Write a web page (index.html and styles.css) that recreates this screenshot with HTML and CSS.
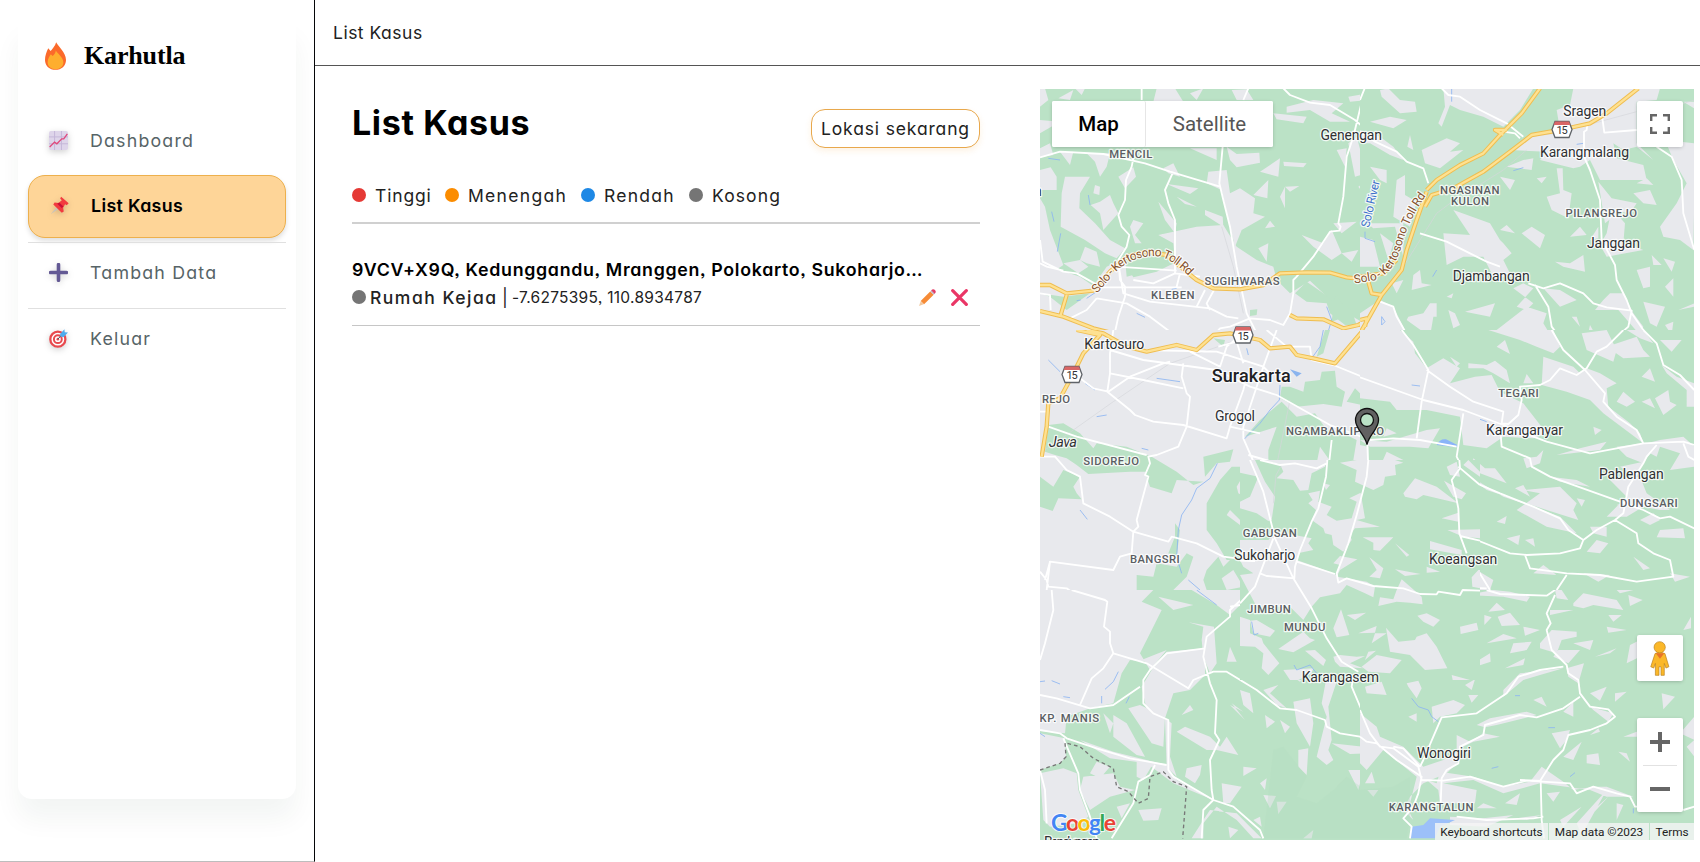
FILE: index.html
```html
<!DOCTYPE html>
<html lang="id">
<head>
<meta charset="utf-8">
<title>Karhutla - List Kasus</title>
<link rel="stylesheet" href="styles.css">
</head>
<body>
<div class="app">
  <aside class="sidebar">
    <div class="side-card">
      <div class="brand">
        <svg class="flame" viewBox="0 0 64 84"><path d="M34 0C39 12 64 30 64 54C64 72 50 84 32 84C14 84 0 72 0 54C0 40 5 28 10 18L17 27C22 21 31 11 34 0Z" fill="#fb6a2b"/><path d="M33 25C38 35 56 45 56 61C56 74 46 82 32 82C18 82 8 74 8 61C8 51 14 43 18 37L23 42C28 38 32 33 33 25Z" fill="#feae2e"/></svg>
        <span class="brand-name">Karhutla</span>
      </div>
      <nav class="menu">
        <a class="item first"><svg class="ico" viewBox="0 0 58 58"><rect width="58" height="58" rx="6" fill="#ded5ea"/><path d="M17 0V58M38 0V58M0 18H58M0 39H58" stroke="#c4b7d8" stroke-width="3"/><path d="M2 49L17 34L24 39L39 24H45L56 9" fill="none" stroke="#e0487c" stroke-width="4"/></svg><span>Dashboard</span></a>
        <a class="item active"><svg class="ico" viewBox="0 0 58 58"><path d="M2 56L20 34L26 40Z" fill="#c9c2b8"/><path d="M34 2L57 22L51 28L46 25L40 36L42 47L36 51L10 26L14 20L26 21L36 13L31 8Z" fill="#f23a3f"/><path d="M28 20L41 32L36 37L22 24Z" fill="#c90e35"/></svg><span>List Kasus</span></a>
        <a class="item"><svg class="ico" viewBox="0 0 58 58"><path d="M29 5V53M5 29H53" stroke="#635994" stroke-width="11" stroke-linecap="round"/></svg><span>Tambah Data</span></a>
        <a class="item"><svg class="ico" viewBox="0 0 58 58"><circle cx="27" cy="31" r="23" fill="#fff" stroke="#e84a4f" stroke-width="7"/><circle cx="27" cy="31" r="12" fill="#fff" stroke="#e84a4f" stroke-width="6"/><circle cx="27" cy="31" r="4" fill="#e84a4f"/><path d="M27 31L40 17" stroke="#456" stroke-width="3"/><path d="M34 15L47 1L48 10L58 11L44 25L34 22Z" fill="#4eabed"/></svg><span>Keluar</span></a>
      </nav>
    </div>
  </aside>
  <main class="main">
    <header class="topbar">List Kasus</header>
    <div class="content">
      <section class="cases">
        <div class="head"><h1>List Kasus</h1><button class="locate">Lokasi sekarang</button></div>
        <div class="legend">
          <span class="key tinggi"><i class="dot red"></i>Tinggi</span>
          <span class="key menengah"><i class="dot orange"></i>Menengah</span>
          <span class="key rendah"><i class="dot blue"></i>Rendah</span>
          <span class="key kosong"><i class="dot gray"></i>Kosong</span>
        </div>
        <article class="case">
          <h2>9VCV+X9Q, Kedunggandu, Mranggen, Polokarto, Sukoharjo…</h2>
          <div class="meta">
            <i class="dot gray"></i><span class="place">Rumah Kejaa</span><span class="bar">|</span><span class="coords">-7.6275395, 110.8934787</span>
            <svg class="act" viewBox="0 0 50 50"><path d="M0 50L5 36L14 45Z" fill="#f1c9a0"/><path d="M5 35L33 7L43 17L15 45Z" fill="#f68b36"/><path d="M33 7L37 3L47 13L43 17Z" fill="#c5b5c4"/><path d="M36 4Q41-2 47 3Q52 9 46 14Z" fill="#e43b65"/></svg>
            <svg class="act" viewBox="0 0 50 50"><path d="M5 5L45 45M45 5L5 45" stroke="#ea3666" stroke-width="9.5" stroke-linecap="round"/></svg>
          </div>
        </article>
      </section>
      <section class="map">
        <svg class="canvas" viewBox="1040 89 654 751">
          <defs>
            <g id="shield"><path d="M-7 -8H7L10 0L7 8H-7L-10 0Z" fill="#fff" stroke="#5f6368" stroke-width="1.3"/><path d="M-7 -8H7L8.3 -4.6H-8.3Z" fill="#d96666"/><text class="num" x="-5.6" y="4.8" textLength="11.2">15</text></g>
          </defs>
          <!-- north west -->
          <svg x="1030" y="80" width="340" height="260" viewBox="0 0 1020 780">
            <rect class="land" width="1020" height="780"/>
            <path class="town" d="M385 465L500 440L580 435L620 500L680 540L730 560L740 600L780 640L840 602L880 640L910 680L905 725L960 705L1020 740V780H0V540L60 560L150 590L190 618L230 560L285 535L290 590L400 560L435 550L430 490ZM30 270L62 262L80 290L80 330L30 330ZM30 355L45 380L60 450L100 555L70 575L30 550ZM105 290L180 290L150 340L148 385L195 430L240 480L285 505L260 535L225 520L165 480L110 450L92 440L95 340ZM45 25L55 60L30 80V25ZM85 55L130 30L120 60ZM135 25H165L155 45ZM380 25H435L460 65H370ZM480 40L520 25L500 60ZM605 30L650 28L670 60H620ZM770 80L850 60L940 70L905 100L960 125L900 125L840 90L770 98ZM955 50L1015 40V60L960 65ZM730 100L830 110L820 130L740 118ZM170 220L240 220L230 260L210 290L195 245ZM30 205L60 190L70 225L30 232ZM90 215L130 215L120 255ZM265 290L310 262L318 290L285 325ZM195 315L210 320L208 345L190 340ZM182 375L210 365L240 345L250 370L265 400L220 450L210 400ZM400 265L430 250L450 290L415 280ZM410 312L505 325L480 342ZM440 350L500 380L465 372ZM385 365L440 430L435 460L405 420ZM525 390L578 410L580 440L525 405ZM535 275L590 270L600 340L630 325L675 355L670 400L705 410L635 450L615 500L595 420L575 330L530 310ZM590 200L620 222L688 218L690 248L620 262L600 240ZM690 275L750 235L745 290ZM760 245L830 250L820 262L762 258ZM670 345L715 300L712 355ZM750 350L765 320L765 385ZM765 320L808 318L780 335ZM705 445L720 422L735 440ZM685 505L715 490L710 545ZM815 465L880 490L905 450L935 520L905 540L850 500ZM935 520L985 510L965 545ZM910 430L980 425L935 460ZM955 190L980 170L1010 280L975 290ZM985 320L1000 310L1020 350V365ZM300 440L310 420L340 430L315 465L335 490L315 490ZM395 462L430 460V475Z"/>
            <path class="town" d="M100 550L150 540L175 560L145 580ZM150 540L165 500L200 515L210 560L170 550ZM30 120L90 125L30 160ZM480 205L560 205L560 240ZM920 210L950 205L945 260Z"/>
            <path class="land" d="M795 640L830 605L880 640L910 665L920 645L935 670L965 690L980 735L945 735L900 700L890 670L830 665ZM660 690L682 688L680 705L660 708ZM300 575L360 550L440 545L380 575L310 592ZM30 640L100 650L180 640L110 690L60 650Z"/>
            <path class="water" d="M175 345L180 375M65 395L72 425M92 460L82 515M55 235L90 240M320 700L345 712M170 655L200 635M140 662L152 660M425 628L440 625M890 680L905 720L890 770M1005 480L1020 440"/>
            <path class="rail" d="M575 440L610 560L640 700"/>
            <path class="road" d="M335 25V60M30 232L90 215L220 222L345 250L420 275L570 320M310 235L305 260L288 300L285 360L265 405L275 440L298 465L290 500L265 540L270 600L285 620L285 650L265 710L250 780M430 275L405 330L415 370L435 420V580L510 590M655 25L640 60M578 200L568 310L580 360L600 440L620 560L650 700L690 780M760 25L780 45L840 68L900 75L975 120L1020 160M1005 25L970 170L950 230L940 350L925 430L932 440L928 452L900 455L880 485L850 530L800 590L790 600L790 640L780 700L760 735L720 720L660 715L600 740L570 745L540 780M30 480L38 545L100 575L140 580L215 622H455M450 580L440 620M30 550L50 560L100 572M310 600L370 610L435 580M260 560L440 572M265 550L280 640L360 665L540 685L590 710L625 715M200 655L290 670L360 710L420 755L470 780M525 630L500 680M552 630L530 670L540 690M30 640L60 645L62 690M200 655L170 690L120 715"/>
            <path class="hwyo" d="M30 615H60L110 640L190 632L240 575L290 530L350 515L410 525L450 560L500 600L550 625L630 628L700 615L750 580L830 577L900 578L950 592L1020 600M110 645L92 705M30 693L100 710L190 745L250 760L280 780M780 705L800 715L880 718L940 745L985 735L1020 715M985 780L1020 735"/><path class="hwyi" d="M30 615H60L110 640L190 632L240 575L290 530L350 515L410 525L450 560L500 600L550 625L630 628L700 615L750 580L830 577L900 578L950 592L1020 600M110 645L92 705M30 693L100 710L190 745L250 760L280 780M780 705L800 715L880 718L940 745L985 735L1020 715M985 780L1020 735"/>
          </svg>
          <!-- north east -->
          <svg x="1360" y="80" width="340" height="260" viewBox="0 0 1020 780">
            <rect class="land" width="1020" height="780"/>
            <path class="town" d="M60 30L85 25L120 60L165 65L170 95L120 100L65 50ZM250 25H520L480 90L430 140L370 110L300 90L270 75L245 140L235 130L255 80ZM640 25H900L890 60L830 65V190L880 240L830 200L790 210L760 190L770 235L850 255L860 300L720 300L690 240L660 260L640 265L540 240L560 215L450 210L520 160L600 150L590 90L630 75ZM350 45L395 35L410 60L370 75ZM30 125L90 110L140 120L100 145ZM0 150L60 170L100 200L130 240L90 225L30 190L0 190ZM142 200L150 165L160 210ZM185 210L260 175L300 190L270 215L310 210L240 265L195 250ZM30 260L80 270L80 310L60 300ZM110 300L135 285V345L170 365L150 440L100 410ZM490 240L520 235L515 270L440 260ZM420 290L465 300L450 330ZM530 295L560 290L545 310ZM590 265L608 265L610 330L635 340L625 415L575 390L560 350L600 340ZM715 305L755 355L830 370L810 400L780 395L735 430ZM820 340L870 330L890 375L850 370ZM830 310L860 295L880 315ZM740 460L755 385L795 430L790 490L850 510L740 530L720 495ZM690 480L715 440V475ZM660 440L680 465L630 470ZM485 460L515 440L555 465L540 505ZM420 450L440 435L465 460ZM250 460L330 465L280 390L390 430L420 480L430 490L455 520L430 540L455 590L400 590L370 530L310 530L260 555ZM585 545L630 550L670 525L675 575L610 560ZM875 525L905 555H880ZM910 535L945 545L935 575ZM830 570L870 560V620L850 625ZM900 440L950 370L980 310L940 240L915 180L1003 190V350L1000 510L960 480L910 470ZM970 65H1003V85ZM915 620L940 595V650ZM750 640L790 640L820 700L850 740L840 765L775 690L705 690L730 660ZM600 630L650 660L600 680L550 625ZM520 625L490 610L460 625L520 670L500 690L470 680ZM160 585L180 570L185 610L215 615L155 630ZM95 610L130 600L110 640ZM190 700L210 670L230 670V710H220L210 770L140 720L145 710ZM265 690L285 700L300 735L280 745ZM315 695L405 670L390 710ZM260 650L280 640L275 655ZM410 750L500 680L560 700L550 730L580 780H430ZM635 710L650 710L660 740ZM680 780L690 735L715 780ZM850 665L915 680L890 740L870 730ZM915 735L940 725L935 765ZM955 690L1003 670V680ZM0 470L40 480L60 560L0 560ZM20 430L130 430L130 530L105 440L40 445Z"/>
            <path class="town" d="M0 700L60 660L100 680L150 780H0ZM60 460L100 490L85 540Z"/>
            <path class="water" d="M275 25V65M460 272L490 263M650 193L670 190M15 455L15 475L45 485M218 590L230 570M65 735V710L75 725Z"/>
            <path class="rail" d="M130 560L230 400L270 370L430 270L500 210M700 130L830 95L940 80L1003 60M500 170L590 160"/>
            <path class="road" d="M0 60L14 25M0 155L45 185L110 215L140 245L190 265L205 310M245 25L265 45L300 50L360 90L440 130L490 170M430 155L465 160L480 175M682 130L680 150L672 155V230L690 270L720 360L725 480L765 555L770 600L800 660L815 700L850 750L880 780M725 100L733 158L830 150M890 200L935 230L965 300L970 400L1003 510M180 460L260 485L330 520L380 545L420 560M505 610L550 625L600 610L670 640L700 670L740 682L815 692L805 740L760 780M525 615L565 680L575 740L605 780M60 665L100 680L110 710L150 780"/>
            <path class="hwyo" d="M540 25L485 100L420 165L370 220L300 255L230 300L200 330M200 335L170 420L140 510L125 570L65 645L0 760M835 25L740 100L690 130L600 150L515 165L450 215L370 275L280 325L215 345L195 380M440 150L405 150L430 165M0 590L70 580L110 540M25 605L35 640L65 645M0 720L20 715L15 740"/><path class="hwyi" d="M540 25L485 100L420 165L370 220L300 255L230 300L200 330M200 335L170 420L140 510L125 570L65 645L0 760M835 25L740 100L690 130L600 150L515 165L450 215L370 275L280 325L215 345L195 380M440 150L405 150L430 165M0 590L70 580L110 540M25 605L35 640L65 645M0 720L20 715L15 740"/>
          </svg>
          <!-- west -->
          <svg x="1030" y="330" width="340" height="270" viewBox="0 0 1020 810">
            <rect class="urban" width="1020" height="810"/>
            <path class="land" d="M55 285L100 280L150 310L190 355L200 340L290 350L365 380L440 425L490 465L520 455L440 450L425 490L360 470L345 425L300 425L175 432L140 405L110 385L75 375L45 365ZM30 440L70 470L100 420L150 440L130 470L140 490L155 508L85 505L68 543L30 530ZM520 380L610 358L600 395L560 400L525 440ZM780 170L820 185L825 155L870 150L875 125L915 122L920 170L945 185L935 230L880 222L800 230L750 205L755 170ZM950 215L975 175L990 190L1020 195V230ZM645 320L690 270L755 215L800 260L855 250L890 300L930 305L980 330L970 390L905 400L870 350L860 400L740 395L715 390L715 360L740 290ZM570 450L605 410L655 410L620 470L625 490L680 520L700 500L690 450L710 430L740 435L765 470L810 480L825 450L850 430L900 400L935 420L925 465L975 490L1000 440L1020 450V510L980 530L1020 560V580L960 580L930 560L880 540L870 620L890 640L830 690L910 720L905 640L900 600L940 635L960 620L1020 640V780H930L915 735L820 700L800 650L790 610L720 600L700 655L660 690L590 690L560 640L530 600V520ZM890 500L930 470L900 560L850 530ZM550 25L585 30L580 50ZM860 80L885 0H900L880 70ZM435 580L450 600L440 680L415 670L435 620ZM320 735L370 740L380 700L440 710L470 670L490 680L470 740L430 780L420 810H350L320 780ZM530 720L565 680L580 710L620 670L690 700L680 780L600 810H540L520 750Z"/>
            <path class="town" d="M590 555L600 540L640 580L680 565L710 600L650 600ZM575 745L610 720L640 770L590 780Z"/>
            <path class="water" d="M55 90L90 125M165 160L195 180M200 260L230 255M335 355L355 360M150 540L172 568M650 55L655 75M380 145L450 155M750 165L748 210L720 240L690 280L640 330M562 400L540 445L500 475L485 510L455 555L445 600L440 680L455 730M475 750L510 780L540 810M880 0L870 50L845 85"/><path d="M780 118L815 130L800 140Z" fill="#8ab4ee"/>
            <path class="rail" d="M30 370L130 300L250 215L420 100L550 55L620 30M780 210L735 430L725 560"/>
            <path class="road" d="M250 0L240 70V130L232 185L300 240L315 255L370 275L460 285L590 325L600 290L640 180L645 160M240 60L340 90L560 120L660 170L740 195L900 285L1020 330M240 130L340 150L460 175M235 185L300 140L400 100L420 95M130 130L190 175L235 185M460 100L455 140L470 190L480 200L470 290L445 350L380 375L355 380L360 400L345 435L355 440L320 570L325 590L310 605L305 670L270 680L250 720L60 695L45 750M55 290L140 320L350 375M30 380L75 380L110 420L150 440L160 520L240 560L310 605L415 635L425 620L500 640L580 680L620 685M330 60L560 65L700 110L720 130M740 0L700 110L640 290L640 325L690 440L740 600L770 700L810 780L830 810M655 375L760 405L790 398L845 412L885 405M905 330L895 420L870 530L830 640L790 720L690 730M700 700L665 810M790 700L860 725L915 740L1010 750M1010 340L1015 420L990 500L980 580L950 640L915 735L925 755L1020 740M480 65L570 110L590 50L650 0M565 50L620 35L640 100M600 290L690 310M710 0L770 50L840 50L845 90L910 105L1020 150M30 725L50 750L55 770L110 775L130 790L225 812M60 695L50 780L65 810M30 245H55"/>
            <path class="hwyo" d="M140 0L210 15L160 70L125 140L90 205L55 220L50 290L35 380M170 0L220 10L290 50L350 65L440 45L500 60L550 15L600 10L690 30L720 55L780 50L800 75L850 85L915 100L1000 0"/><path class="hwyi" d="M140 0L210 15L160 70L125 140L90 205L55 220L50 290L35 380M170 0L220 10L290 50L350 65L440 45L500 60L550 15L600 10L690 30L720 55L780 50L800 75L850 85L915 100L1000 0"/>
          </svg>
          <!-- east -->
          <svg x="1360" y="330" width="340" height="270" viewBox="0 0 1020 810">
            <rect class="land" width="1020" height="810"/>
            <path class="town" d="M0 0H120L160 35L165 70L200 115L250 85L300 115L270 160L345 140L395 135L420 185L490 220L560 310L520 325L430 320L380 355L310 345L300 260L200 240L110 240L90 215L0 205ZM385 0H580L600 50L580 70L530 50L480 30ZM550 80L640 110L660 130L680 115L720 130L770 160L740 175L745 230L810 280L840 310L850 340L730 250L690 210L620 185L545 165ZM665 10L740 0L770 60L760 95L680 60ZM740 50L830 20L850 60L870 80L790 85ZM800 0L850 0L880 40L840 25ZM410 50L435 30L450 72ZM325 100L380 105L405 92L440 120L450 160L400 130L370 115H325ZM270 80L300 100L290 110ZM490 160L500 132L520 160ZM900 30L965 30L935 65ZM845 140L870 115L885 155ZM905 105L950 140L1003 160V230H980V180L920 130ZM770 215L790 185L825 215L800 230ZM885 205L925 180L930 215L950 225L910 255ZM845 215L870 205L885 235ZM700 290L725 300L705 315ZM0 330L80 335L200 300L240 295L205 355L150 350L30 350ZM70 320L80 295L110 310ZM0 345L25 350V420L0 500ZM0 410L60 410L80 365L130 390L100 410L110 440L60 450L45 480L0 470ZM260 405L295 390L300 430L275 440ZM270 460L315 490L300 505ZM340 385L375 415L405 415L440 460L360 430L335 420ZM465 475L490 465L510 500ZM300 420L430 500L520 530L600 560L650 610L560 590L470 540L540 490L490 480L600 470L650 520L640 540L655 570L560 540L380 480ZM490 385L530 380L550 360L540 400L500 415ZM570 440L650 450L690 470L600 455ZM590 375L660 355L740 335L720 360ZM770 350L860 340L900 330L970 320L1003 350V410L930 420L960 370L900 350L890 380L870 370L850 400L800 380ZM780 410L850 395L830 440ZM750 450L840 440L860 490L930 540H900L850 530L800 560L740 560L800 500ZM650 505L675 510L665 530ZM840 570L880 550L900 570L870 585ZM900 600L970 595L975 625L890 622ZM690 590L740 590V620L700 610ZM680 665L710 630L745 640L720 670ZM820 680L870 715L850 720ZM930 730L990 740L945 755ZM670 730L750 735L715 755ZM520 730L550 705L590 735ZM440 625L480 615L475 645ZM495 630L520 625L525 650ZM410 575L440 558L435 582ZM340 780L350 720L400 750L390 780ZM770 525L800 515L790 530Z"/>
            <path d="M230 345Q240 325 258 328L292 345V352Z" fill="#8ab4f8"/><path class="water" d="M155 165L180 168M360 268L380 275"/>
            <path class="road" d="M125 0L160 45L205 120L185 215L170 325M200 120L270 170L340 215L430 245L425 280L445 282L475 255L485 210L480 170L540 165L570 150L600 115L650 135L680 115L710 65L740 50L790 0M575 0L610 60L675 120L735 190L730 215L770 260L830 300L850 340M850 0L890 40L910 105L960 135L1003 180M0 142L190 210L310 240L430 285L560 335L690 370L850 340L970 335L1003 345M310 250L290 380L300 400L275 455L290 500L298 560L300 620L320 670L350 715L390 780M30 330L100 325L180 330L290 350M298 415L350 460L420 490L520 530L600 565L625 600L670 630L710 600L765 570L790 550L805 470L850 400L860 380L890 345M420 290L425 350L510 385L515 410L570 440L780 515L850 540L900 565L930 560L1003 595M765 570L830 610L835 640L880 670L930 690L940 740L830 755L720 735L620 730L510 715L495 675M300 620L350 630L450 670L500 675L600 670L660 655L670 630M0 755L60 765L130 775L250 770L380 775M620 735L590 780M970 340L985 380L1003 390M22 340L25 420L0 480"/>
          </svg>
          <!-- south west -->
          <svg x="1030" y="590" width="340" height="260" viewBox="0 0 1020 780">
            <rect class="land" width="1020" height="780"/>
            <path class="town" d="M0 0H370L335 35L395 60L370 110L330 190L345 215L300 210L275 250L250 340L180 355L110 380L105 430L0 420ZM410 185L525 175L525 255L480 300L430 310L405 385L350 360L335 290L365 240ZM340 208L410 180L360 240ZM485 0H640V35L600 75L560 45ZM475 97L552 110L560 220L540 250L520 200L515 150L520 110ZM660 20L720 10L815 25L820 80L650 50ZM30 430L105 445L108 500L90 520L30 540ZM150 450L250 485L410 525L440 570L550 630L430 580L350 520L240 505ZM405 385L425 400L420 500L440 560L410 530Z"/>
            <path class="town" d="M385 20L490 45L430 60ZM590 215L600 170L620 215ZM920 200L985 195L960 220L1020 240V330L990 260L930 250ZM760 240L850 230L810 275ZM700 300L745 285L720 310L770 355L740 345ZM790 335L840 325L850 400L840 470L800 400ZM890 260L930 245L895 350L905 450L895 480L910 510L890 525L860 500L890 380L875 340ZM905 460L1000 470L1020 490L960 492ZM955 540L1000 540L985 600ZM1005 570L1020 555V600ZM605 340L640 365L600 345L645 390ZM630 300L660 310L670 370L640 345ZM705 375L735 395L710 415ZM750 390L780 410L765 430ZM455 375L480 345L490 360ZM440 425L465 410L540 440L570 470L590 440L625 495L560 480L530 480ZM250 440L250 375L290 400L345 500L320 495ZM220 370L250 400L240 430ZM295 355L330 345L405 380L400 470L365 460ZM470 535L515 525L510 555L495 580L465 560ZM575 580L635 590L600 640H580ZM640 530L680 535L640 558ZM690 580L710 565L705 600ZM700 615L738 618L720 655ZM740 635L770 635L745 672ZM805 480L835 475L830 555L805 530ZM325 660L395 655L385 690L340 692ZM30 550L100 535L140 550L145 600L175 680L145 700L60 710L40 690ZM160 560L250 550L270 590L315 600L240 620L180 660L150 600ZM180 550L200 515L240 530L210 565ZM260 650L300 640L275 685ZM595 710L625 720L600 745ZM485 745L520 690L540 660L620 670L660 710L695 745H670L620 690L560 650L520 700V745ZM670 690L690 680L695 710ZM320 510L370 520L340 570L320 560ZM820 745L850 720L845 745Z"/>
            <path d="M700 745L730 480L760 470L830 560L800 620L860 640L910 600L950 560L1020 610V745Z" fill="#b4dcc0" opacity=".35"/>
            <path class="water" d="M500 0L560 45M225 298L250 275L265 245M215 318V340M288 340L298 320M30 275L45 273M65 272L90 282M100 320L120 323M30 430L45 440"/>
            <path class="road" d="M65 0L70 60L45 160L30 210M125 0L225 30L232 35L222 110L240 125V160L250 190L220 235L185 265L150 345M250 190L350 220L475 295L490 270L550 245L590 245L680 300L750 355L800 360L885 390L890 410L930 430L990 440L1020 460M30 315L80 325L180 355L250 345L330 290M665 0L600 60V80L530 140L520 200L540 280L560 330L555 430L568 450L540 510L545 600L550 630M600 50L630 45M525 175L410 190L360 240L340 270V340L370 370L415 390V540L430 560L550 630L610 650L690 720L700 745M30 420L90 430L110 445L200 475L300 505L410 525M100 445L145 550L150 600L180 680L200 745M375 525L360 555L325 575L310 640L245 745M30 540L45 600L50 700M550 630L520 660L515 745M815 0L870 90L930 220L970 260L965 290L1020 420"/>
            <path class="bound" d="M30 540L90 520L108 500L105 458L150 470L190 505L250 535L260 590L295 605L325 640L355 625L360 560L400 545L430 575L470 590L458 745"/>
          </svg>
          <!-- south east -->
          <svg x="1360" y="590" width="340" height="260" viewBox="0 0 1020 780">
            <rect class="land" width="1020" height="780"/>
            <path class="town" d="M320 15L400 0L450 5L510 20L500 35L430 20ZM585 0H605L625 30L590 25ZM640 40L670 10L770 30L790 60L700 45L670 55L640 48ZM570 60L640 60L570 75ZM805 15L848 30L810 48ZM770 0H820L780 10ZM385 65L410 38L435 60ZM373 75L395 82L373 105ZM413 80L450 68L480 105L425 108ZM490 110L540 120L495 137ZM740 110L800 120L745 128ZM745 75L785 75L760 95ZM970 120L993 80V115ZM380 160L430 132L470 145ZM450 190L460 160L515 155L500 180ZM540 160L575 120L650 125V140L605 150L590 190L540 175ZM640 160L700 150L690 180ZM595 180L660 180L625 220L580 200ZM705 200L770 175L750 190ZM810 165L840 150V200L800 220ZM300 245L390 190L392 215ZM435 235L495 205L490 225ZM620 235L672 220L655 280L625 260ZM430 300L480 250L610 235L540 255L490 270L430 320ZM140 280L175 272L185 295L170 325L145 290ZM15 290L65 275L80 315L20 310ZM315 285L345 268L335 300ZM325 315H355L335 338ZM690 310L740 290L720 332ZM765 310L800 305L765 335ZM905 310L945 320L910 358ZM215 350L280 330L315 345L290 370L240 380L220 400ZM145 380L170 370V395ZM350 405L390 385L500 365L530 375L410 405L375 412ZM520 330L545 320L560 350ZM610 365L640 335V380ZM690 350L760 370L745 395L700 360ZM290 435L330 455L370 430L420 440L340 455L290 480ZM575 430L630 420L620 450L600 475ZM610 500L665 455L640 510ZM680 495L715 490L720 525L680 520ZM775 485L800 490L810 515ZM690 435L715 415L720 425ZM790 440L830 425L840 440ZM0 370L50 410L60 440L130 470L190 530L250 510L300 480L290 520L260 550L190 580L150 620L130 660L160 690L145 660L170 560L120 520L70 480L20 540L0 520ZM15 580L35 545L45 580ZM22 600L55 600L40 620ZM200 570L230 580L240 545L340 560L430 590L510 575L545 530L610 575L640 600L700 590L740 590L820 620L740 620L690 600L540 580L430 610L340 570L250 580L350 600L345 640L240 640L235 600ZM435 640L480 610L470 645ZM560 610L600 605L580 635ZM600 690L665 650L610 710ZM650 700L740 600L665 735ZM700 660L745 620L690 680ZM770 640L790 645L770 690ZM350 655L370 640L410 655ZM270 680L370 685L460 675L380 710L270 705ZM470 685L545 675L500 690ZM960 430L1003 380V450ZM980 470L1003 450V500Z"/>
            <path d="M0 600L100 590L150 560L150 680L140 745H0Z" fill="#b4dcc0" opacity=".35"/>
            <path d="M150 745L155 710L190 705L210 685L285 690L240 710L225 745Z" fill="#9cc0f9"/><path class="water" d="M155 325L175 350L205 360L215 380L235 395M465 317H480M565 413H585M395 535L415 530M630 560L645 548M820 670V655"/>
            <path class="road" d="M120 0L200 15L230 8L300 12L310 0M380 0L420 12L500 15L560 17L585 0M585 15L560 70L572 100L560 120L575 180L620 225L625 250L655 270L660 310L690 350L745 358L765 380L740 400L690 420L625 435L610 480L580 510L542 570L545 690L552 745M610 230L540 240L475 260L440 310L350 370L245 382L220 440L190 510L180 530M660 320L610 355L530 382L480 375L375 405L370 435L330 455L300 470L295 520L260 540L245 565L242 640L215 640M0 360L30 430L60 470L100 475L175 530L185 570M100 470L130 475L180 530M0 440L20 455L50 460L110 510L185 560L175 610L160 650L130 685L155 710L150 745M185 570L250 572L330 560L430 590L500 572L630 580L650 610L700 590L770 610L810 620L825 650H850M970 660L1003 650M290 680L380 690L520 685L550 680M480 570L545 573"/>
          </svg>
          <!-- Sukoharjo and surroundings -->
          <svg x="1240" y="460" width="240" height="220" viewBox="0 0 720 660">
            <rect class="land" width="720" height="660"/>
            <path class="town" d="M0 0H45L75 65L105 110L95 180L85 183L50 160L0 145V125L30 110L55 50L0 38ZM60 0H262L255 20L215 40L205 90L180 92L160 60L110 55L130 35L120 12ZM300 8L350 0H465L490 8L465 15L468 45L435 50L430 75L400 90L345 65L350 30ZM250 70L270 75L258 90ZM205 100L240 92L235 125L275 140L260 165L290 182L335 175L350 125L328 115L362 98L375 175L350 180L420 200L345 205L330 225L335 240L310 275L280 255L275 225L255 220L250 205L215 180L228 150L205 130L218 120ZM0 240H85L110 215L215 235L205 250L220 270L180 278L170 300L240 325L290 345L300 315L280 310L300 288L352 298L300 330L290 350L320 355L380 365L405 380L400 412L375 400L320 375L300 400L240 412L215 440L190 480L150 440H50L0 345L40 340L10 320L0 300ZM368 232L460 232L420 272L400 270V248ZM465 250L508 285L500 290ZM388 292L430 325L420 355L388 350L410 330ZM465 328L542 342L495 348ZM560 320L600 335L560 338ZM570 243L665 270V285L570 268ZM490 100L525 55L590 80L655 130L550 105L530 118L495 110ZM620 20L650 5L660 50L630 45ZM612 62L678 100L665 118L640 110ZM605 175L655 158V185ZM622 210L720 208V235L670 230ZM470 390L485 358L545 410L548 433L510 428L470 425L415 438L420 412L460 418ZM695 352L715 330H720V385L697 380ZM685 0L720 35V50L670 15ZM280 505L303 448L328 525L290 532ZM320 465L378 458L345 480ZM355 520L410 498L405 518ZM395 550L405 520L440 520ZM532 467L560 460L600 480L580 500L550 485ZM660 500L710 488L715 510L662 522ZM438 503L475 545L525 540L530 530L560 520L590 560L622 625L555 630L510 585L450 575ZM375 600L385 575L408 572ZM365 620L410 585L485 600L450 640L385 635ZM280 590L300 585L350 590L375 588L330 610L370 625L300 620L285 605ZM30 482L50 480L105 512L90 530L40 520ZM0 470L30 480L30 520L65 535L70 550L118 610L85 645L65 625L70 580L45 560L0 558ZM115 567L190 515L210 535L225 540L160 577ZM195 572L225 570L258 600L250 618ZM130 630L220 625L215 640L175 660H150ZM635 645L690 660H638Z"/>
            <path class="water" d="M35 485L42 525L55 520M162 615L170 630L210 615L230 640"/>
            <path class="rail" d="M125 15L108 45L100 130"/>
            <path class="road" d="M30 0L70 95L105 235L160 355L215 445L260 535L305 605L355 635M60 0L120 15L165 10L230 25L260 10M262 0L258 50L235 145L215 185L180 270L165 320L163 355L80 348L60 340M385 0L380 50L350 165L325 250L290 340L295 368L320 355L400 378L490 385L540 402L590 403L595 395L660 405L668 390L720 392M170 305L285 342M100 235L60 340L45 380L0 430M658 0L660 25L635 60L648 110L655 145L658 220L680 280M655 20L720 75M660 228L720 242M0 302L45 303"/>
          </svg>
          <g class="places">
            <text x="1320.5" y="140" textLength="61.5">Genengan</text><text x="1563.3" y="116" textLength="43">Sragen</text><text x="1540" y="157" textLength="89">Karangmalang</text><text x="1587" y="247.5" textLength="53">Janggan</text><text x="1452.7" y="281" textLength="77">Djambangan</text><text x="1084.3" y="348.5" textLength="60">Kartosuro</text><text class="city" x="1211.7" y="381.7" textLength="79">Surakarta</text><text x="1215" y="421" textLength="40">Grogol</text><text class="island" x="1049" y="447.3" textLength="28">Java</text><text x="1234.3" y="560" textLength="61">Sukoharjo</text><text x="1486" y="434.7" textLength="77">Karanganyar</text><text x="1599" y="478.7" textLength="64.7">Pablengan</text><text x="1429" y="563.7" textLength="68.3">Koeangsan</text><text x="1301.7" y="682.3" textLength="77.3">Karangasem</text><text x="1417" y="757.7" textLength="54">Wonogiri</text><text x="1044" y="847" textLength="56">Bendungan</text><text x="1034" y="195.500">n</text>
          </g>
          <g class="areas">
            <text x="1109.3" y="157.7" textLength="43">MENCIL</text><text x="1151" y="299.3" textLength="43.5">KLEBEN</text><text x="1204.5" y="284.500" textLength="75">SUGIHWARAS</text><text x="1440" y="194" textLength="59.5">NGASINAN</text><text x="1451" y="204.5" textLength="38">KULON</text><text x="1565.5" y="217.3" textLength="71.5">PILANGREJO</text><text x="1286" y="434.7" textLength="98">NGAMBAKLIPURO</text><text x="1083.3" y="464.7" textLength="55.7">SIDOREJO</text><text x="1042" y="402.7" textLength="28">REJO</text><text x="1242.7" y="537.3" textLength="54">GABUSAN</text><text x="1130" y="562.7" textLength="49.7">BANGSRI</text><text x="1498.3" y="396.7" textLength="40.3">TEGARI</text><text x="1620" y="506.7" textLength="57.7">DUNGSARI</text><text x="1247" y="613.3" textLength="43.7">JIMBUN</text><text x="1284" y="631" textLength="41.3">MUNDU</text><text x="1039.5" y="721.7" textLength="59.7">KP. MANIS</text><text x="1388.7" y="811.3" textLength="84.7">KARANGTALUN</text>
          </g>
          <path id="toll-west" d="M1097 293.5L1113 275Q1130 256 1155 256Q1171 257 1190 277.5" fill="none"/>
          <path id="toll-east" d="M1354.5 283.5L1376 280Q1393 273 1401 248Q1408 220 1428 193" fill="none"/>
          <text class="toll"><textPath href="#toll-west" textLength="112">Solo - Kertosono Toll Rd</textPath></text>
          <text class="toll"><textPath href="#toll-east" textLength="122">Solo - Kertosono Toll Rd</textPath></text>
          <text class="river" transform="translate(1369 228) rotate(-77)" textLength="48">Solo River</text>
          <use href="#shield" x="1562" y="129.5"/><use href="#shield" x="1243" y="335"/><use href="#shield" x="1072" y="374.5"/>
          <path d="M1367 444.500C1365 435 1355.500 429 1355.500 420A11.500 11.500 0 0 1 1378.500 420C1378.500 429 1369 435 1367 444.500ZM1367 413.500A6.500 6.500 0 1 0 1367 426.500A6.500 6.500 0 1 0 1367 413.500Z" fill="#616161" fill-rule="evenodd" stroke="#111" stroke-width="1.300"/>
          <text class="google" x="1051" y="830.500" textLength="65"><tspan fill="#4285f4">G</tspan><tspan fill="#ea4335">o</tspan><tspan fill="#fbbc05">o</tspan><tspan fill="#4285f4">g</tspan><tspan fill="#34a853">l</tspan><tspan fill="#ea4335">e</tspan></text>
        </svg>
        <div class="types"><button class="on">Map</button><button>Satellite</button></div>
        <button class="ctl full"><svg viewBox="0 0 20 20"><path d="M1.200 7V1.200H7M13 1.200H18.800V7M18.800 13V18.800H13M7 18.800H1.200V13" fill="none" stroke="#666" stroke-width="2.400"/></svg></button>
        <button class="ctl peg"><svg viewBox="0 0 60 106"><path d="M15 38Q30 30 45 38L57 78L48 82L43 68V104H33V78H27V104H16V68L11 82L2 78Z" fill="#fbb829" stroke="#b8801e" stroke-width="2"/><circle cx="29" cy="19" r="17" fill="#fbb829" stroke="#b8801e" stroke-width="2"/><path d="M17 37H43L30 54Z" fill="#e8732a"/></svg></button>
        <div class="zoom"><button><svg viewBox="0 0 20 20"><path d="M10 0V20M0 10H20" stroke="#666" stroke-width="4"/></svg></button><button><svg viewBox="0 0 20 20"><path d="M0 10H20" stroke="#666" stroke-width="4"/></svg></button></div>
        <div class="credits"><span class="c1">Keyboard shortcuts</span><span class="c2">Map data ©2023</span><span class="c3">Terms</span></div>
      </section>
    </div>
  </main>
</div>
</body>
</html>
```
FILE: styles.css
```css
* { box-sizing: border-box; }
body { margin: 0; font-family: Inter, "Open Sans", sans-serif; font-feature-settings: "cv11", "ss03"; color: #222; background: #fff; }
button { font: inherit; font-feature-settings: inherit; border: 0; padding: 0; background: #fff; color: inherit; }
h1, h2 { margin: 0; color: #000; white-space: nowrap; }
.app { display: flex; width: 1700px; height: 862px; overflow: hidden; }

.sidebar { width: 315px; padding: 18px; border-right: 1px solid #050608; border-bottom: 1px solid #bdbdbd; }
.side-card { width: 278px; height: 781px; padding: 24px 10px 0 10px; border-radius: 14px; box-shadow: 0 20px 27px rgba(20, 60, 45, .05); }
.brand { display: flex; align-items: center; height: 28px; padding-left: 17px; gap: 18px; }
.flame { width: 21px; height: 28px; }
.brand-name { font: bold 26px "Liberation Serif", serif; color: #000; letter-spacing: -.15px; }
.menu { display: flex; flex-direction: column; margin-top: 39px; }
.item { display: flex; align-items: center; height: 66px; padding: 0 0 6px 21px; gap: 22px; font-size: 17.8px; letter-spacing: 1.2px; color: #576467; border-top: 1px solid #e0e0e0; }
.item.first { padding-bottom: 4px; border-color: transparent; }
.item.active { height: 63px; margin-bottom: 4px; padding-bottom: 2px; border: 1px solid #edb04d; border-radius: 17px; background: #fed598; color: #000; font-weight: 600; letter-spacing: .35px; box-shadow: 0 3px 5px rgba(0, 0, 0, .13); }
.ico { width: 19px; height: 19px; filter: drop-shadow(0 2px 3px rgba(0, 0, 0, .18)); }

.main { flex: 1; min-width: 0; }
.topbar { height: 66px; padding: 0 0 0 18px; line-height: 65px; font-size: 17.5px; letter-spacing: .5px; border-bottom: 1px solid #555; }
.content { display: flex; justify-content: space-between; padding: 23px 6px 0 37px; }
.cases { width: 628px; }
.head { display: flex; justify-content: space-between; padding-top: 20px; height: 86px; }
h1 { font-size: 34px; line-height: 28px; font-weight: 700; letter-spacing: .65px; }
.locate { width: 169px; height: 39px; border: 1px solid #e8a84c; border-radius: 14px; font-size: 17.5px; letter-spacing: .85px; white-space: nowrap; box-shadow: 0 3px 6px rgba(240, 160, 60, .14); }
.legend { display: flex; height: 49px; border-bottom: 2px solid #d0d0d0; padding-top: 8px; font-size: 17.5px; letter-spacing: 1.1px; }
.key { display: flex; align-items: center; height: 24px; gap: 9px; }
.tinggi { width: 93px; letter-spacing: .85px; }
.menengah { width: 136px; letter-spacing: 1.3px; }
.rendah { width: 108px; letter-spacing: 1.25px; }
.dot { width: 14px; height: 14px; border-radius: 50%; flex: none; }
.red { background: #e53935; }
.orange { background: #fb8c00; }
.blue { background: #1e88e5; }
.gray { background: #757575; }
.case { height: 102px; padding-top: 34px; border-bottom: 1px solid #c6c6c6; }
h2 { font-size: 17.8px; line-height: 24px; font-weight: 600; letter-spacing: .7px; }
.meta { display: flex; align-items: center; height: 24px; margin-top: 3px; }
.place { width: 132px; margin-left: 4px; font-size: 17.5px; font-weight: 500; letter-spacing: 1.5px; white-space: nowrap; }
.bar { width: 10px; font-size: 17.5px; }
.coords { width: 402px; font-size: 15.5px; letter-spacing: .28px; white-space: nowrap; }
.act { width: 17px; height: 17px; flex: none; margin: 0 0 0 5px; }
.act + .act { margin-left: 15px; }

.map { position: relative; width: 654px; height: 751px; overflow: hidden; font-family: Roboto, sans-serif; font-feature-settings: normal; }
.canvas { display: block; width: 654px; height: 751px; }
.land { fill: #bbe2c6; }
.town, .urban { fill: #e8e9ed; }
.road { fill: none; stroke: #fff; stroke-width: 5.5; stroke-linejoin: round; }
.rail { fill: none; stroke: #d4d7db; stroke-width: 2; }
.water { fill: none; stroke: #8bb5f2; stroke-width: 2.5; }
.hwyo { fill: none; stroke: #efbd50; stroke-width: 13; stroke-linejoin: round; }
.hwyi { fill: none; stroke: #fee191; stroke-width: 7; stroke-linejoin: round; }
.bound { fill: none; stroke: #777; stroke-width: 4; stroke-dasharray: 11 9; }
.canvas text { font-family: Roboto, sans-serif; paint-order: stroke; stroke: rgba(255, 255, 255, .8); stroke-width: 2.5px; stroke-linejoin: round; }
.places text { font-size: 14px; fill: #303134; }
.places .city { font-size: 18px; font-weight: 500; fill: #202124; }
.places .island { font-style: italic; font-size: 14.5px; }
.areas text { font-size: 11.3px; font-weight: 500; fill: #5b5e63; }
.canvas .toll { font-size: 12px; fill: #84502c; }
.canvas .river { font-size: 12px; fill: #3d70ca; }
.canvas .num { font-size: 11px; fill: #333; stroke: none; }
.canvas .google { font-family: Lato, sans-serif; font-size: 23px; font-weight: 700; stroke-width: 2px; }

.types, .ctl, .zoom { position: absolute; background: #fff; border-radius: 2px; box-shadow: 0 1px 4px -1px rgba(0, 0, 0, .3); }
.types { left: 12px; top: 12px; width: 221px; height: 46px; display: flex; }
.types button { flex: 1; font-size: 20.5px; color: #565656; border-radius: 2px; }
.types .on { flex: none; width: 94px; border-right: 1px solid #e6e6e6; font-weight: 500; color: #000; }
.ctl, .zoom { right: 11px; width: 46px; height: 46px; display: flex; align-items: center; justify-content: center; }
.full { top: 12px; }
.full svg { width: 20px; height: 20px; }
.peg { top: 546px; }
.peg svg { width: 20px; height: 35px; }
.zoom { top: 629px; height: 94px; flex-direction: column; }
.zoom button { width: 34px; height: 47px; display: flex; align-items: center; justify-content: center; }
.zoom button + button { border-top: 1px solid #e2e2e2; }
.zoom svg { width: 20px; height: 20px; }
.credits { position: absolute; right: 0; bottom: 0; height: 17px; display: flex; gap: 1px; font-size: 11.8px; line-height: 18px; color: #222; white-space: nowrap; }
.credits span { background: rgba(245, 245, 245, .8); text-align: center; }
.c1 { width: 113px; }
.c2 { width: 100px; }
.c3 { width: 44px; }
```
